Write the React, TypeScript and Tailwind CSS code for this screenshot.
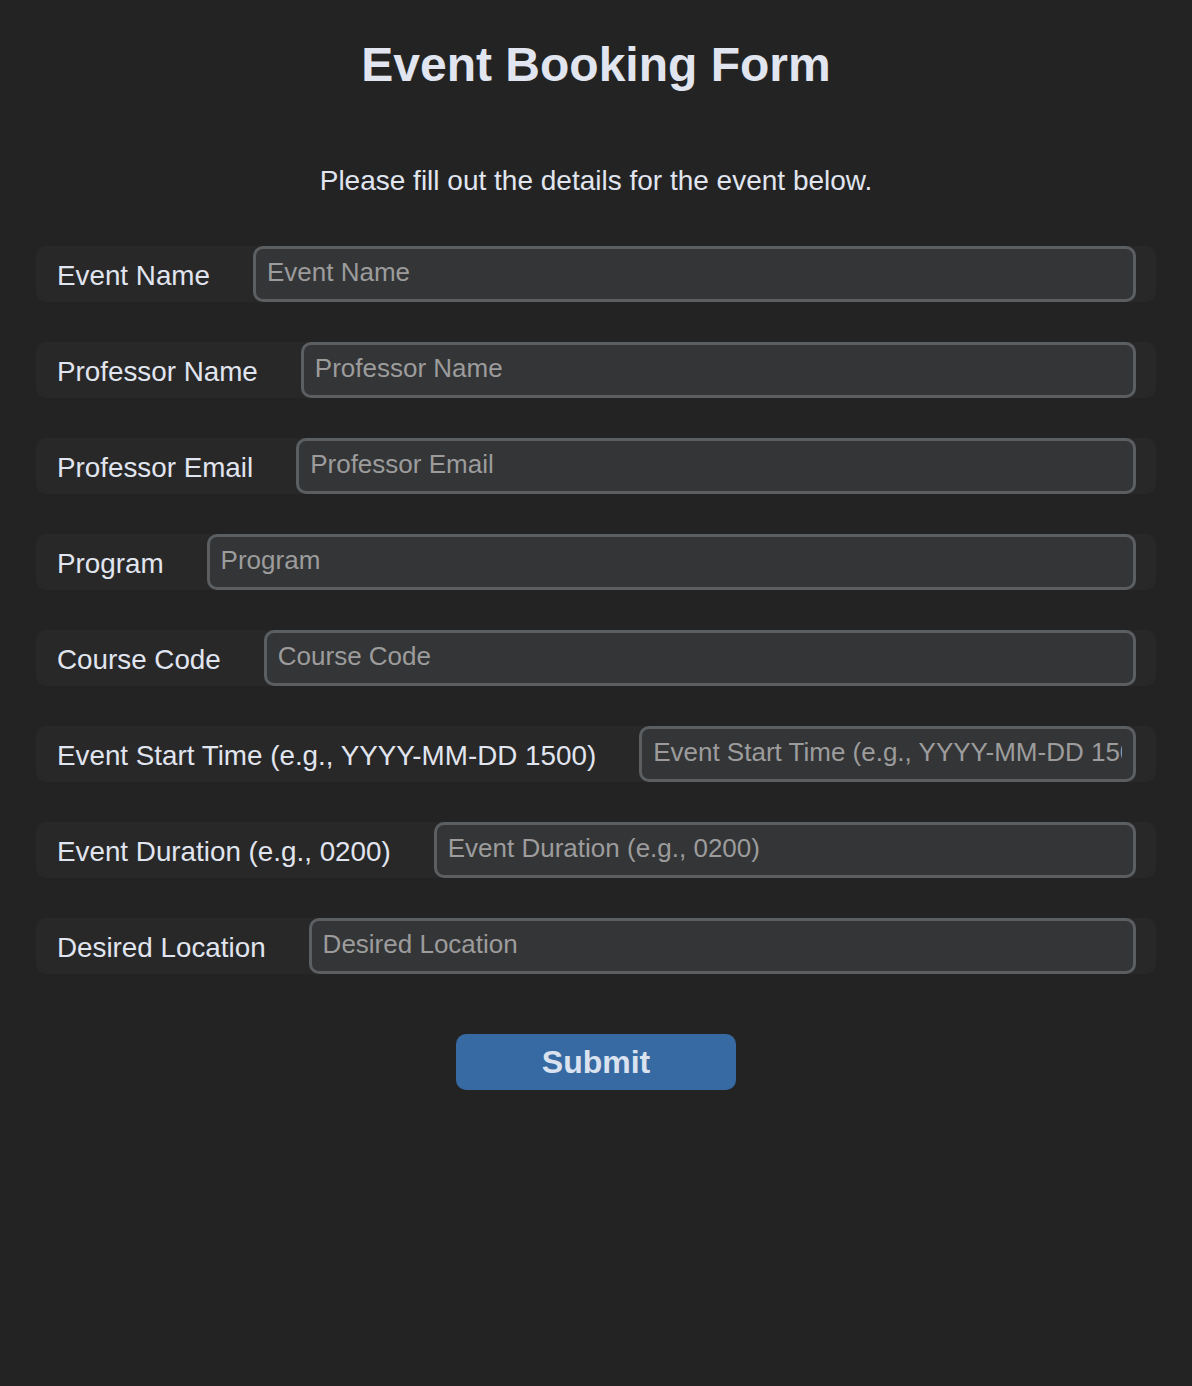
const FIELDS = [
  "Event Name",
  "Professor Name",
  "Professor Email",
  "Program",
  "Course Code",
  "Event Start Time (e.g., YYYY-MM-DD 1500)",
  "Event Duration (e.g., 0200)",
  "Desired Location",
]

export default function App() {
  return (
    <div className="min-h-screen bg-[#232323] px-9 font-['Liberation_Sans',Arial,sans-serif] text-[#e1e5ef]">
      <h1 className="pt-[41px] text-center text-[48px] leading-none font-bold">
        Event Booking Form
      </h1>
      <p className="mt-[78px] text-center text-[28px] leading-none">
        Please fill out the details for the event below.
      </p>

      <form className="mt-[51px] flex flex-col gap-10">
        {FIELDS.map((field) => (
          <FormRow key={field} label={field} />
        ))}
        <div className="mt-5 flex justify-center">
          <button
            type="button"
            className="h-14 w-[280px] rounded-[10px] bg-[#376aa2] text-[32px] leading-none font-bold text-[#dae2ef]"
          >
            Submit
          </button>
        </div>
      </form>
    </div>
  )
}

function FormRow({ label }: { label: string }) {
  return (
    <label className="flex h-14 items-center gap-[43px] rounded-[10px] bg-[#282828] pr-5 pl-[21px]">
      <span className="shrink-0 pt-[3px] text-[27.8px] leading-none whitespace-nowrap">
        {label}
      </span>
      <input
        type="text"
        placeholder={label}
        className="h-14 min-w-0 flex-1 rounded-[10px] border-[3px] border-[#5b5f62] bg-[#343537] px-[11px] pb-[3px] text-[26px] text-[#e1e5ef] outline-none placeholder:text-[#9c9c9c]"
      />
    </label>
  )
}
